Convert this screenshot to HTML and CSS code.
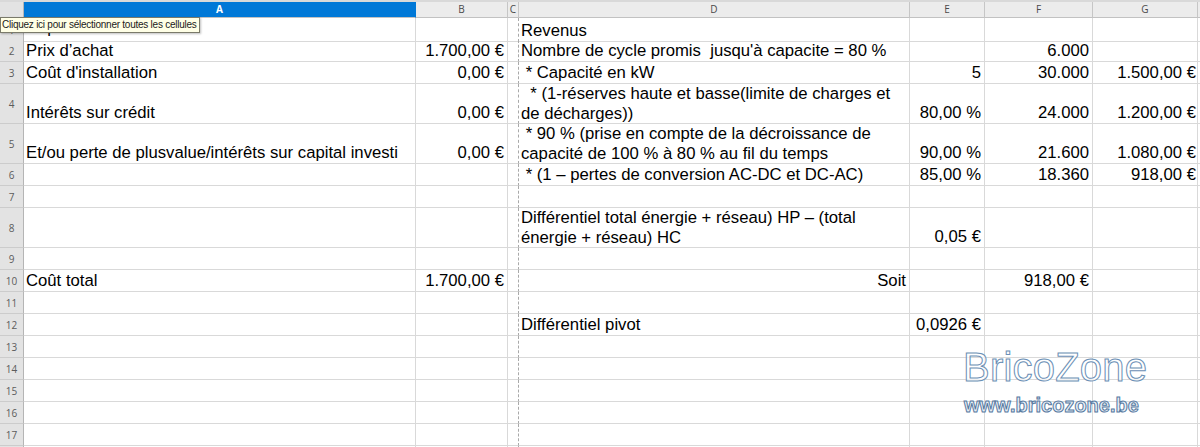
FILE: index.html
```html
<!DOCTYPE html>
<html lang="fr">
<head>
<meta charset="utf-8">
<title>Feuille</title>
<link rel="stylesheet" href="styles.css">
</head>
<body>
<div class="sheet">
  <div class="topbar"></div>
  <div class="row hdr">
    <div class="corner"></div>
    <div class="ch sel">A</div>
    <div class="ch">B</div>
    <div class="ch">C</div>
    <div class="ch">D</div>
    <div class="ch">E</div>
    <div class="ch">F</div>
    <div class="ch">G</div>
    <div class="ch last"></div>
  </div>

  <div class="row">
    <div class="rh">1</div>
    <div class="c under">Dépenses</div><div class="c"></div><div class="c cc"></div>
    <div class="c">Revenus</div><div class="c"></div><div class="c"></div><div class="c"></div><div class="c"></div>
  </div>
  <div class="row">
    <div class="rh">2</div>
    <div class="c">Prix d’achat</div><div class="c n">1.700,00 €</div><div class="c cc"></div>
    <div class="c">Nombre de cycle promis  jusqu'à capacite = 80 %</div><div class="c"></div><div class="c n">6.000</div><div class="c"></div><div class="c"></div>
  </div>
  <div class="row">
    <div class="rh">3</div>
    <div class="c">Coût d'installation</div><div class="c n">0,00 €</div><div class="c cc"></div>
    <div class="c"> * Capacité en kW</div><div class="c n">5</div><div class="c n">30.000</div><div class="c n g">1.500,00 €</div><div class="c"></div>
  </div>
  <div class="row tall">
    <div class="rh">4</div>
    <div class="c">Intérêts sur crédit</div><div class="c n">0,00 €</div><div class="c cc"></div>
    <div class="c wrap">  * (1-réserves haute et basse(limite de charges et de décharges))</div><div class="c n">80,00 %</div><div class="c n">24.000</div><div class="c n g">1.200,00 €</div><div class="c"></div>
  </div>
  <div class="row tall">
    <div class="rh">5</div>
    <div class="c">Et/ou perte de plusvalue/intérêts sur capital investi</div><div class="c n">0,00 €</div><div class="c cc"></div>
    <div class="c wrap"> * 90 % (prise en compte de la décroissance de capacité de 100 % à 80 % au fil du temps</div><div class="c n">90,00 %</div><div class="c n">21.600</div><div class="c n g">1.080,00 €</div><div class="c"></div>
  </div>
  <div class="row">
    <div class="rh">6</div>
    <div class="c"></div><div class="c"></div><div class="c cc"></div>
    <div class="c"> * (1 – pertes de conversion AC-DC et DC-AC)</div><div class="c n">85,00 %</div><div class="c n">18.360</div><div class="c n g">918,00 €</div><div class="c"></div>
  </div>
  <div class="row">
    <div class="rh">7</div>
    <div class="c"></div><div class="c"></div><div class="c cc"></div>
    <div class="c"></div><div class="c"></div><div class="c"></div><div class="c"></div><div class="c"></div>
  </div>
  <div class="row tall">
    <div class="rh">8</div>
    <div class="c"></div><div class="c"></div><div class="c cc"></div>
    <div class="c wrap">Différentiel total énergie + réseau) HP – (total énergie + réseau) HC</div><div class="c n">0,05 €</div><div class="c"></div><div class="c"></div><div class="c"></div>
  </div>
  <div class="row">
    <div class="rh">9</div>
    <div class="c"></div><div class="c"></div><div class="c cc"></div>
    <div class="c"></div><div class="c"></div><div class="c"></div><div class="c"></div><div class="c"></div>
  </div>
  <div class="row">
    <div class="rh">10</div>
    <div class="c">Coût total</div><div class="c n">1.700,00 €</div><div class="c cc"></div>
    <div class="c n">Soit</div><div class="c"></div><div class="c n">918,00 €</div><div class="c"></div><div class="c"></div>
  </div>
  <div class="row">
    <div class="rh">11</div>
    <div class="c"></div><div class="c"></div><div class="c cc"></div>
    <div class="c"></div><div class="c"></div><div class="c"></div><div class="c"></div><div class="c"></div>
  </div>
  <div class="row">
    <div class="rh">12</div>
    <div class="c"></div><div class="c"></div><div class="c cc"></div>
    <div class="c">Différentiel pivot</div><div class="c n">0,0926 €</div><div class="c"></div><div class="c"></div><div class="c"></div>
  </div>
  <div class="row">
    <div class="rh">13</div>
    <div class="c"></div><div class="c"></div><div class="c cc"></div>
    <div class="c"></div><div class="c"></div><div class="c"></div><div class="c"></div><div class="c"></div>
  </div>
  <div class="row">
    <div class="rh">14</div>
    <div class="c"></div><div class="c"></div><div class="c cc"></div>
    <div class="c"></div><div class="c"></div><div class="c"></div><div class="c"></div><div class="c"></div>
  </div>
  <div class="row">
    <div class="rh">15</div>
    <div class="c"></div><div class="c"></div><div class="c cc"></div>
    <div class="c"></div><div class="c"></div><div class="c"></div><div class="c"></div><div class="c"></div>
  </div>
  <div class="row">
    <div class="rh">16</div>
    <div class="c"></div><div class="c"></div><div class="c cc"></div>
    <div class="c"></div><div class="c"></div><div class="c"></div><div class="c"></div><div class="c"></div>
  </div>
  <div class="row">
    <div class="rh">17</div>
    <div class="c"></div><div class="c"></div><div class="c cc"></div>
    <div class="c"></div><div class="c"></div><div class="c"></div><div class="c"></div><div class="c"></div>
  </div>
  <div class="row">
    <div class="rh"></div>
    <div class="c"></div><div class="c"></div><div class="c cc"></div>
    <div class="c"></div><div class="c"></div><div class="c"></div><div class="c"></div><div class="c"></div>
  </div>

  <div class="tooltip">Cliquez ici pour sélectionner toutes les cellules</div>
  <div class="watermark">
    <div class="wm-title">BricoZone</div>
    <div class="wm-url">www.bricozone.be</div>
  </div>
</div>
</body>
</html>
```
FILE: styles.css
```css
html, body {
  margin: 0;
  padding: 0;
  background: #ffffff;
}
.sheet {
  position: relative;
  width: 1200px;
  height: 447px;
  overflow: hidden;
  font-family: "Liberation Sans", Arial, sans-serif;
  color: #000;
}
.topbar {
  height: 2px;
  background: #d9d9d9;
}
.row {
  display: grid;
  grid-template-columns: 24px 392px 92px 11px 391px 75px 108px 105px 1fr;
  height: 22px;
}
.row.tall {
  height: 40px;
}
.row.hdr {
  height: 16px;
}
.corner, .ch {
  box-sizing: border-box;
  background: #ececec;
  border-right: 1px solid #c6c6c6;
  border-bottom: 1px solid #c2c2c2;
  font-family: "Open Sans", "Liberation Sans", sans-serif;
  font-size: 10px;
  line-height: 15px;
  text-align: center;
  color: #4a4a4a;
}
.corner {
  background: #e3e3e3;
  border-right-color: #b5b5b5;
}
.ch.sel {
  background: #0078d7;
  color: #ffffff;
  font-weight: 700;
  border-right-color: #0078d7;
}
.ch.last {
  border-right: none;
}
.rh {
  box-sizing: border-box;
  background: #e3e3e3;
  border-right: 1px solid #b5b5b5;
  border-bottom: 1px solid #cccccc;
  font-family: "Open Sans", "Liberation Sans", sans-serif;
  font-size: 10px;
  color: #5c5c5c;
  display: flex;
  align-items: center;
  justify-content: center;
}
.c {
  box-sizing: border-box;
  border-right: 1px solid #d9d9d9;
  border-bottom: 1px solid #d9d9d9;
  padding: 0 3px 0 2px;
  font-size: 16.7px;
  line-height: 20px;
  white-space: pre;
  overflow: visible;
  display: flex;
  flex-direction: column;
  justify-content: flex-end;
  min-width: 0;
}
.c.under {
  padding-bottom: 3px;
}
.c.n {
  text-align: right;
  align-items: flex-end;
}
.c.g {
  padding-right: 1px;
}
.c.wrap {
  white-space: pre-wrap;
  line-height: 19.5px;
}
.c.cc {
  border-right: 1px dashed #a9a9a9;
}
.tooltip {
  position: absolute;
  left: 0;
  top: 17px;
  height: 14px;
  padding: 0 2px 0 1px;
  background: #ffffe6;
  border: 1px solid #7a7a6a;
  box-shadow: 1px 1px 2px rgba(0, 0, 0, 0.25);
  font-family: "Liberation Sans", Arial, sans-serif;
  font-size: 10px;
  letter-spacing: -0.25px;
  line-height: 14px;
  color: #1a1a1a;
  white-space: nowrap;
}
.watermark {
  position: absolute;
  left: 963px;
  top: 347px;
  display: flex;
  flex-direction: column;
  align-items: flex-start;
}
.wm-title {
  font-family: "Liberation Sans", Arial, sans-serif;
  font-size: 40px;
  line-height: 40px;
  color: rgba(255, 255, 255, 0.7);
  -webkit-text-stroke: 1px #6b8fb5;
  letter-spacing: 0.2px;
}
.wm-url {
  margin-top: 8px;
  margin-left: 1px;
  font-family: "Liberation Sans", Arial, sans-serif;
  font-size: 20px;
  font-weight: 700;
  line-height: 20px;
  color: rgba(225, 234, 244, 0.8);
  -webkit-text-stroke: 1px #56799f;
}
```
